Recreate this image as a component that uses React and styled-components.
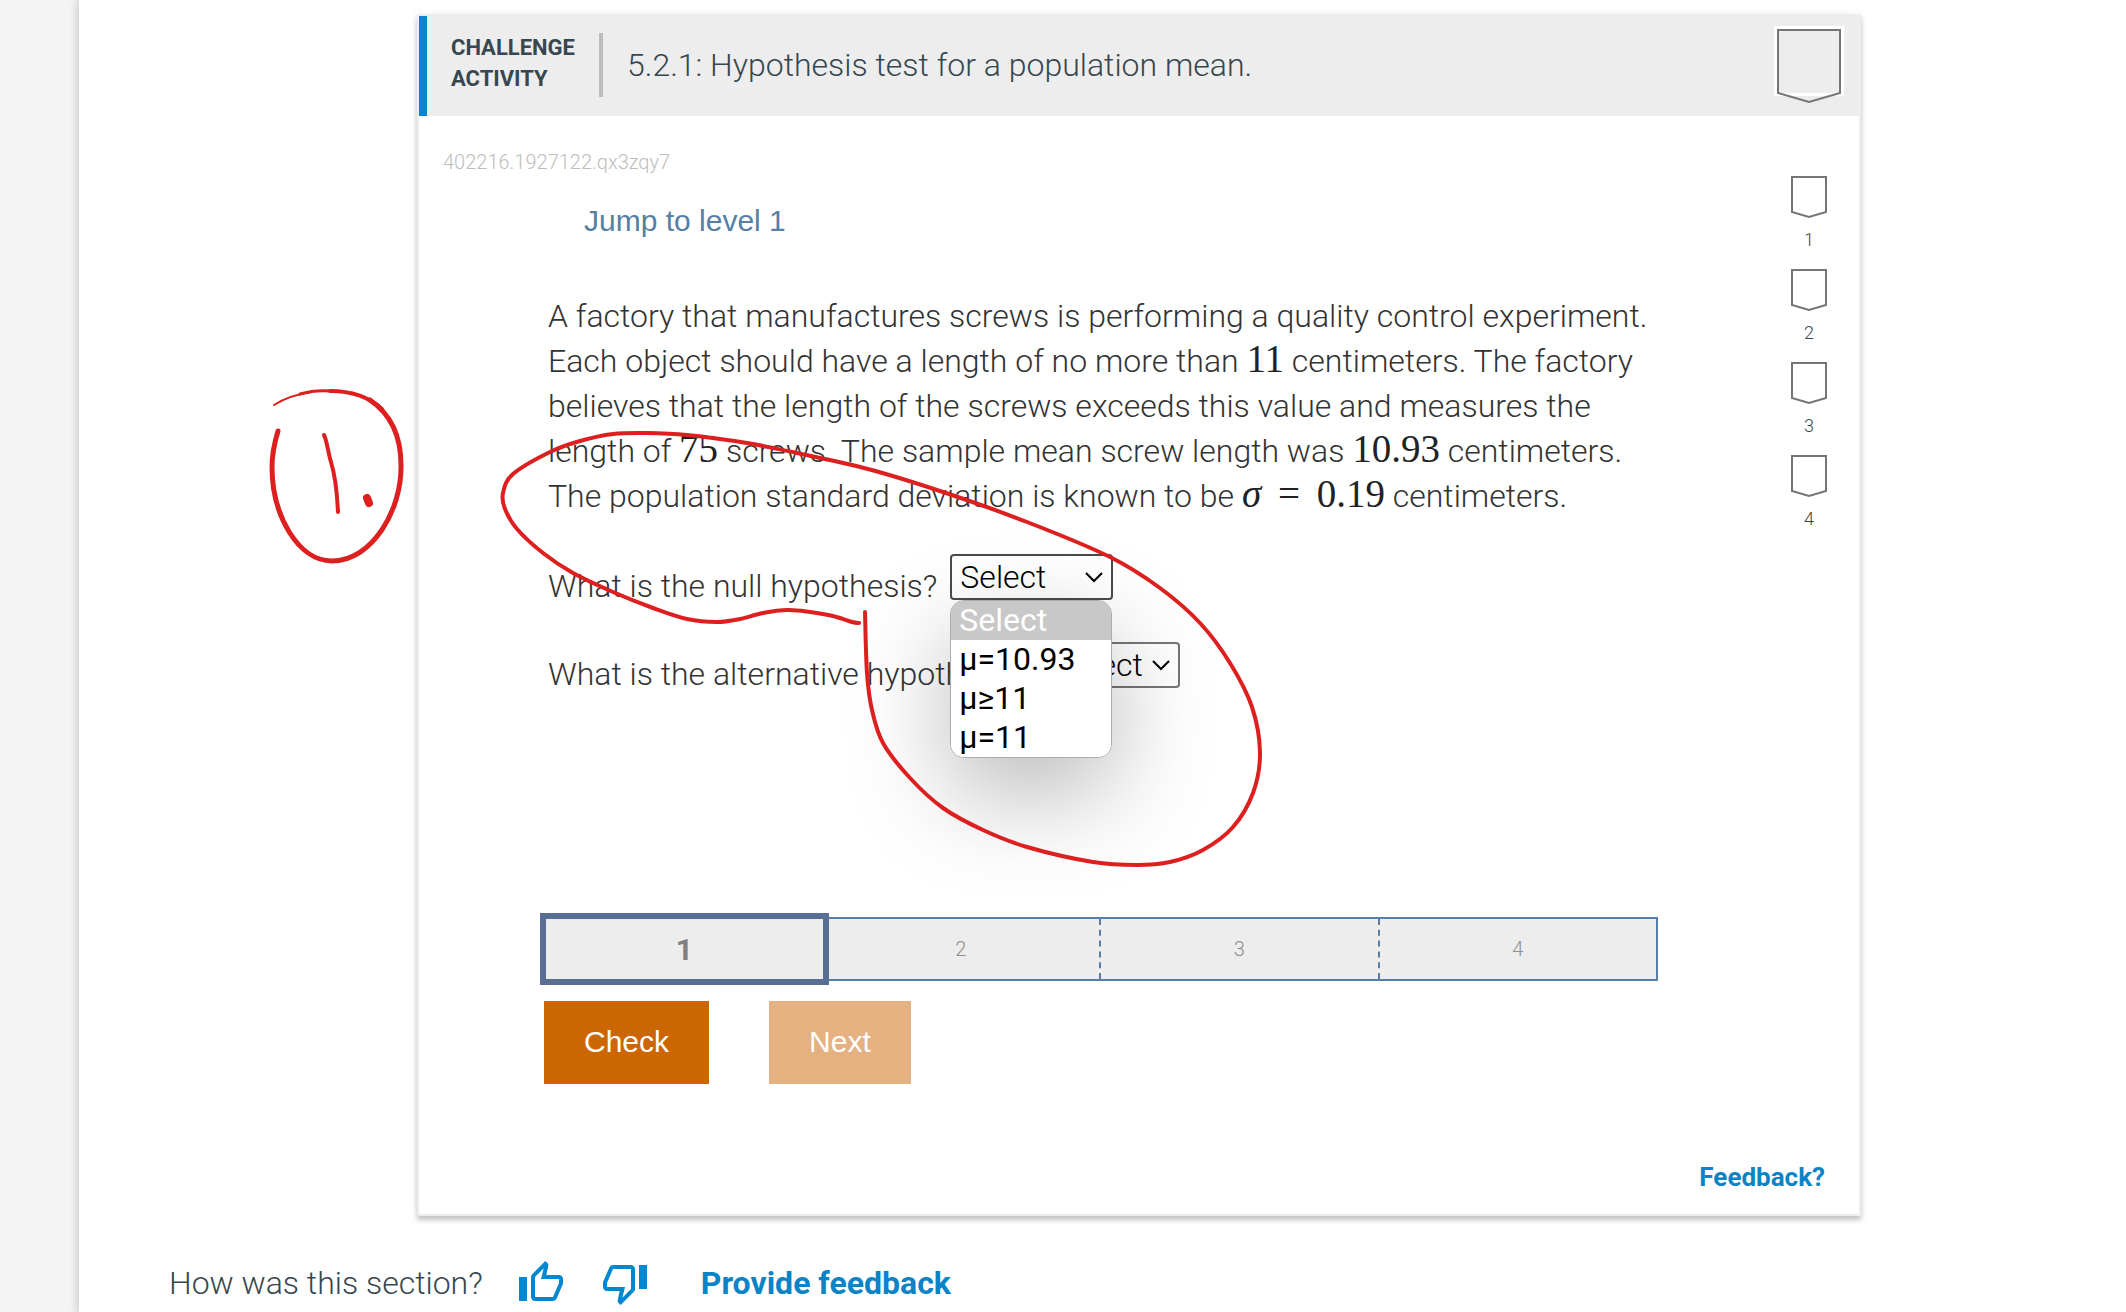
import React from "react";
import styled, { createGlobalStyle } from "styled-components";

const GlobalStyle = createGlobalStyle`
  *, *::before, *::after { box-sizing: border-box; }
  html, body { margin: 0; background: #fff; }
  body {
    font-family: Roboto, "Liberation Sans", sans-serif;
    font-weight: 300;
    color: #37474f;
  }
`;

const Page = styled.div`
  position: relative;
  display: flex;
  min-height: 100vh;
  overflow: hidden;
`;

const Gutter = styled.aside`
  flex: 0 0 79px;
  background: #f4f4f4;
`;

const Main = styled.main`
  flex: 1;
  padding: 14px 18px 6px 91px;
  background: #fff;
  box-shadow: 0 0 10px rgba(0, 0, 0, 0.25);
`;

const Card = styled.section`
  max-width: 1444px;
  margin: 0 auto;
  border: 2px solid #ededed;
  box-shadow: 0 4px 5px rgba(0, 0, 0, 0.22), 0 0 10px rgba(0, 0, 0, 0.05);
`;

const CardHeader = styled.header`
  display: flex;
  align-items: center;
  height: 100px;
  padding: 0 15px 2px 0;
  background: #ededed;
  border-left: 8px solid #0288d1;
`;

const Kind = styled.div`
  width: 148px;
  margin-left: 24px;
  padding-bottom: 4px;
  font-size: 22px;
  line-height: 31px;
  font-weight: 700;
  text-transform: uppercase;
`;

const Divider = styled.div`
  width: 4px;
  height: 64px;
  margin-right: 24px;
  background: #bdbdbd;
`;

const Title = styled.h1`
  flex: 1;
  margin: 0;
  font-size: 32px;
  line-height: 40px;
  font-weight: 300;
`;

const BadgeFrame = styled.div`
  width: 70px;
  height: 70px;
  margin-bottom: 8px;
  border: 3px solid #fff;
`;

const BadgeIcon = styled.svg`
  display: block;
  overflow: visible;
  fill: none;
  stroke: #757575;
  stroke-width: 2;
`;

const CardBody = styled.div`
  display: flex;
`;

const Work = styled.div`
  flex: 1;
  padding-top: 32px;
`;

const Rail = styled.ol`
  flex: 0 0 100px;
  display: flex;
  flex-direction: column;
  align-items: center;
  gap: 19px;
  margin: 0;
  padding: 60px 0 0;
  list-style: none;
`;

const RailItem = styled.li`
  display: flex;
  flex-direction: column;
  align-items: center;
  gap: 12px;
  font-size: 18px;
  line-height: 20px;
`;

const ActivityId = styled.div`
  padding-left: 24px;
  font-size: 20px;
  line-height: 28px;
  color: #bdbdbd;
`;

const Exercise = styled.div`
  padding: 27px 101px 0 125px;
`;

const JumpLink = styled.a`
  display: inline-block;
  margin-left: 40px;
  font: 400 30px/36px "Liberation Sans", Arial, sans-serif;
  color: #557fa6;
  text-decoration: none;
`;

const Prompt = styled.div`
  margin-top: 55px;
  padding-left: 4px;
  font-size: 32px;
  line-height: 45px;
  color: #333;
`;

const Story = styled.p`
  margin: 0 0 35px;
`;

const MathText = styled.span`
  font-family: "Liberation Serif", "Times New Roman", serif;
  font-weight: 400;
  font-size: 39px;
  line-height: 40px;
  color: #222;
  white-space: nowrap;
`;

const Relation = styled.span`
  margin: 0 7px;
`;

const Question = styled.div`
  display: flex;
  align-items: flex-start;
  gap: 13px;
  height: 88px;
`;

const QuestionLabel = styled.label`
  padding-top: 10px;
`;

const Picker = styled.div`
  position: relative;
  width: ${(p) => (p.$open ? 163 : 133)}px;
`;

const SelectBox = styled.select`
  display: block;
  width: 100%;
  height: 46px;
  padding: 0 0 1px 8px;
  appearance: none;
  border: 2px solid ${(p) => (p.$open ? "#4a4a4a" : "#767676")};
  border-radius: 4px;
  background: #fff;
  font: 300 32px/40px Roboto, sans-serif;
  color: #000;
`;

const Chevron = styled.svg`
  position: absolute;
  top: 18px;
  right: 10px;
  fill: none;
  stroke: #000;
  stroke-width: 2;
  pointer-events: none;
`;

const Menu = styled.ul`
  position: absolute;
  z-index: 2;
  top: 46px;
  left: 0;
  width: 162px;
  margin: 0;
  padding: 0;
  overflow: hidden;
  list-style: none;
  border: 1px solid #acacac;
  border-radius: 14px;
  background: #fff;
  box-shadow: 0 36px 100px rgba(0, 0, 0, 0.28);
`;

const Option = styled.li`
  height: 39px;
  padding-left: 8px;
  font-size: 32px;
  line-height: 38px;
  font-weight: 400;
  color: ${(p) => (p.$current ? "#fff" : "#000")};
  background: ${(p) => (p.$current ? "#c8c8c8" : "#fff")};
`;

const Levels = styled.div`
  display: flex;
  height: 64px;
  margin-top: 187px;
  border: 2px solid #557fa6;
  background: #ededed;
`;

const Level = styled.div`
  flex: 1;
  display: flex;
  align-items: center;
  justify-content: center;
  font-size: 20px;
  color: #8f8f8f;
  border-right: ${(p) => (p.$last ? "0" : "2px dashed #557fa6")};
`;

const CurrentLevel = styled(Level)`
  position: relative;
  margin: -6px;
  border: 6px solid #586f93;
  background: #ededed;
  font-size: 30px;
  font-weight: 700;
  color: #808080;
`;

const Actions = styled.div`
  display: flex;
  gap: 60px;
  margin-top: 20px;
`;

const ActionButton = styled.button`
  height: 83px;
  padding: 0 40px 2px;
  border: 0;
  background: ${(p) => (p.disabled ? "#e5b180" : "#cc6600")};
  font: 400 30px/36px "Liberation Sans", Arial, sans-serif;
  color: #fff;
`;

const CardFooter = styled.footer`
  display: flex;
  justify-content: flex-end;
  padding: 77px 34px 21px;
`;

const StrongLink = styled.a`
  font-size: ${(p) => (p.$large ? 32 : 26)}px;
  line-height: ${(p) => (p.$large ? 38 : 32)}px;
  font-weight: 700;
  color: #0a84c6;
  text-decoration: none;
`;

const SectionFeedback = styled.div`
  display: flex;
  align-items: center;
  margin: 43px 0 0 -1px;
  font-size: 32px;
  line-height: 38px;
`;

const Thumbs = styled.div`
  display: flex;
  gap: 36px;
  margin: 0 52px 0 34px;
`;

const ThumbButton = styled.button`
  width: 48px;
  height: 48px;
  padding: 0;
  border: 0;
  background: none;
  color: #0288d1;
`;

const Ink = styled.svg`
  position: absolute;
  z-index: 3;
  top: 0;
  left: 0;
  fill: none;
  stroke: #de1f1f;
  stroke-linecap: round;
  stroke-linejoin: round;
  pointer-events: none;
`;

const LOOP = [
  [859, 623], [852, 622], [833, 616], [810, 612], [788, 610], [763, 613], [740, 619],
  [717, 622], [687, 619], [653, 608], [613, 592], [573, 573], [543, 553], [517, 529],
  [505, 509], [503, 493], [513, 474], [550, 452], [580, 441], [613, 434], [647, 433],
  [687, 435], [747, 443], [797, 453], [868, 469], [943, 492], [1027, 522], [1110, 557],
  [1160, 588], [1200, 623], [1230, 663], [1252, 707], [1260, 753], [1253, 793],
  [1233, 827], [1203, 850], [1170, 862], [1137, 865], [1093, 862], [1027, 847],
  [983, 830], [943, 808], [910, 778], [883, 743], [872, 710], [867, 673], [865, 612],
];

function smoothPath(points) {
  let d = `M${points[0][0]} ${points[0][1]}`;
  for (let i = 0; i < points.length - 1; i += 1) {
    const a = points[Math.max(i - 1, 0)];
    const b = points[i];
    const c = points[i + 1];
    const e = points[Math.min(i + 2, points.length - 1)];
    d += ` C${b[0] + (c[0] - a[0]) / 6} ${b[1] + (c[1] - a[1]) / 6}`;
    d += ` ${c[0] - (e[0] - b[0]) / 6} ${c[1] - (e[1] - b[1]) / 6} ${c[0]} ${c[1]}`;
  }
  return d;
}

function QuestionRow({ id, label, options, open }) {
  return (
    <Question>
      <QuestionLabel htmlFor={id}>{label}</QuestionLabel>
      <Picker $open={open}>
        <SelectBox id={id} $open={open} defaultValue="Select">
          {options.map((o) => (
            <option key={o}>{o}</option>
          ))}
        </SelectBox>
        <Chevron width="18" height="11" viewBox="0 0 18 11">
          <path d="M1 1l8 8 8-8" />
        </Chevron>
        {open && (
          <Menu>
            {options.map((o, i) => (
              <Option key={o} $current={i === 0}>{o}</Option>
            ))}
          </Menu>
        )}
      </Picker>
    </Question>
  );
}

export default function App() {
  return (
    <Page>
      <GlobalStyle />
      <Gutter />
      <Main>
        <Card>
          <CardHeader>
            <Kind>Challenge<br />activity</Kind>
            <Divider />
            <Title>5.2.1: Hypothesis test for a population mean.</Title>
            <BadgeFrame>
              <BadgeIcon width="64" height="74" viewBox="0 0 64 74">
                <path d="M1 1H63V64L32 73L1 64Z" />
              </BadgeIcon>
            </BadgeFrame>
          </CardHeader>
          <CardBody>
            <Work>
              <ActivityId>402216.1927122.qx3zqy7</ActivityId>
              <Exercise>
                <JumpLink href="#level-1">Jump to level 1</JumpLink>
                <Prompt>
                  <Story>
                    A factory that manufactures screws is performing a quality control experiment.
                    Each object should have a length of no more than <MathText>11</MathText> centimeters.
                    The factory believes that the length of the screws exceeds this value and measures
                    the length of <MathText>75</MathText> screws. The sample mean screw length
                    was <MathText>10.93</MathText> centimeters. The population standard deviation is
                    known to be <MathText><i>σ</i> <Relation>=</Relation> 0.19</MathText> centimeters.
                  </Story>
                  <QuestionRow
                    id="null-hypothesis"
                    label="What is the null hypothesis?"
                    options={["Select", "μ=10.93", "μ≥11", "μ=11"]}
                    open
                  />
                  <QuestionRow
                    id="alternative-hypothesis"
                    label="What is the alternative hypothesis?"
                    options={["Select"]}
                  />
                </Prompt>
                <Levels>
                  <CurrentLevel>1</CurrentLevel>
                  <Level>2</Level>
                  <Level>3</Level>
                  <Level $last>4</Level>
                </Levels>
                <Actions>
                  <ActionButton type="button">Check</ActionButton>
                  <ActionButton type="button" disabled>Next</ActionButton>
                </Actions>
              </Exercise>
            </Work>
            <Rail>
              {[1, 2, 3, 4].map((n) => (
                <RailItem key={n}>
                  <BadgeIcon width="36" height="42" viewBox="0 0 36 42">
                    <path d="M1 1H35V36L18 41L1 36Z" />
                  </BadgeIcon>
                  {n}
                </RailItem>
              ))}
            </Rail>
          </CardBody>
          <CardFooter>
            <StrongLink href="#feedback">Feedback?</StrongLink>
          </CardFooter>
        </Card>
        <SectionFeedback>
          How was this section?
          <Thumbs>
            <ThumbButton type="button" aria-label="Thumbs up">
              <svg width="48" height="48" viewBox="0 0 24 24" fill="currentColor">
                <path d="M9 21h9c.83 0 1.54-.5 1.84-1.22l3.02-7.05c.09-.23.14-.47.14-.73v-2c0-1.1-.9-2-2-2h-6.31l.95-4.57.03-.32c0-.41-.17-.79-.44-1.06L14.17 1 7.58 7.59C7.22 7.95 7 8.45 7 9v10c0 1.1.9 2 2 2zM9 9l4.34-4.34L12 10h9v2l-3 7H9V9zM1 9h4v12H1z" />
              </svg>
            </ThumbButton>
            <ThumbButton type="button" aria-label="Thumbs down">
              <svg width="48" height="48" viewBox="0 0 24 24" fill="currentColor">
                <path d="M15 3H6c-.83 0-1.54.5-1.84 1.22l-3.02 7.05c-.09.23-.14.47-.14.73v2c0 1.1.9 2 2 2h6.31l-.95 4.57-.03.32c0 .41.17.79.44 1.06L9.83 23l6.59-6.59c.36-.36.58-.86.58-1.41V5c0-1.1-.9-2-2-2zm0 12l-4.34 4.34L12 14H3v-2l3-7h9v10zm4-12h4v12h-4z" />
              </svg>
            </ThumbButton>
          </Thumbs>
          <StrongLink $large href="#provide-feedback">Provide feedback</StrongLink>
        </SectionFeedback>
      </Main>
      <Ink width="1300" height="900" viewBox="0 0 1300 900">
        <path strokeWidth="2" d="M274 405C285 398 297 394 312 392" />
        <path strokeWidth="3" d="M300 394C310 391 320 390 332 391" />
        <path strokeWidth="4" d="M330 391C352 391 370 398 382 409" />
        <path strokeWidth="5" d="M370 400C392 415 401 438 401 465C402 510 372 561 332 561C298 561 272 515 272 467C272 455 275 441 278 431" />
        <path strokeWidth="4" d="M324 435C327 441 328 452 331 462C335 475 337 490 338 512" />
        <path strokeWidth="8" d="M367 498L369 503" />
        <path strokeWidth="4" d={smoothPath(LOOP)} />
      </Ink>
    </Page>
  );
}
